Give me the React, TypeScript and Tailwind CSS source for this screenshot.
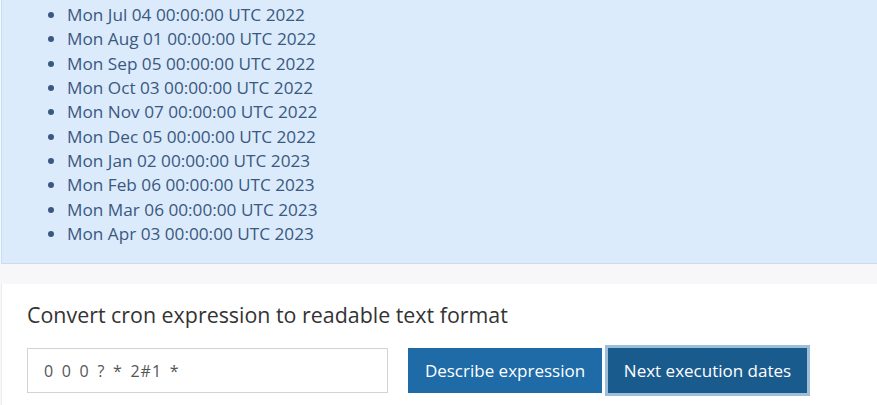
const dates = [
  "Mon Jul 04 00:00:00 UTC 2022",
  "Mon Aug 01 00:00:00 UTC 2022",
  "Mon Sep 05 00:00:00 UTC 2022",
  "Mon Oct 03 00:00:00 UTC 2022",
  "Mon Nov 07 00:00:00 UTC 2022",
  "Mon Dec 05 00:00:00 UTC 2022",
  "Mon Jan 02 00:00:00 UTC 2023",
  "Mon Feb 06 00:00:00 UTC 2023",
  "Mon Mar 06 00:00:00 UTC 2023",
  "Mon Apr 03 00:00:00 UTC 2023",
];

export default function App() {
  return (
    <div
      className="h-[405px] w-[877px] overflow-hidden bg-[#f7f7f9] pl-px"
      style={{ fontFamily: '"Open Sans", "Liberation Sans", sans-serif' }}
    >
      {/* result panel */}
      <div className="h-[264px] w-[900px] border-b border-l border-[#c6ddf5] bg-[#dbebfb] pt-[3px]">
        <ul className="list-disc pl-[65px] text-[17.2px] leading-[24.35px] text-[#3a5880] marker:text-[#3a5880]">
          {dates.map((d) => (
            <li key={d}>{d}</li>
          ))}
        </ul>
      </div>

      {/* converter card */}
      <div className="mt-5 h-[200px] w-[900px] border-l border-[#ececec] bg-white px-[25px] pt-[17px]">
        <h2 className="text-[21.4px] leading-[28px] text-[#333]">
          Convert cron expression to readable text format
        </h2>
        <div className="mt-[16px] flex items-center">
          <input
            readOnly
            value="0 0 0 ? * 2#1 *"
            className="h-[45px] w-[361px] border border-[#ced4da] bg-white px-4 text-[16px] tracking-[1px] text-[#555] outline-none [word-spacing:2.5px]"
          />
          <button className="ml-5 h-[45px] w-[194px] bg-[#1e6ba7] text-[17px] text-white">
            Describe expression
          </button>
          <button className="ml-[3px] h-[51px] w-[205px] border-[3px] border-[#9dbdd9] bg-[#1a5b8e] text-[17px] text-white">
            Next execution dates
          </button>
        </div>
      </div>
    </div>
  );
}
